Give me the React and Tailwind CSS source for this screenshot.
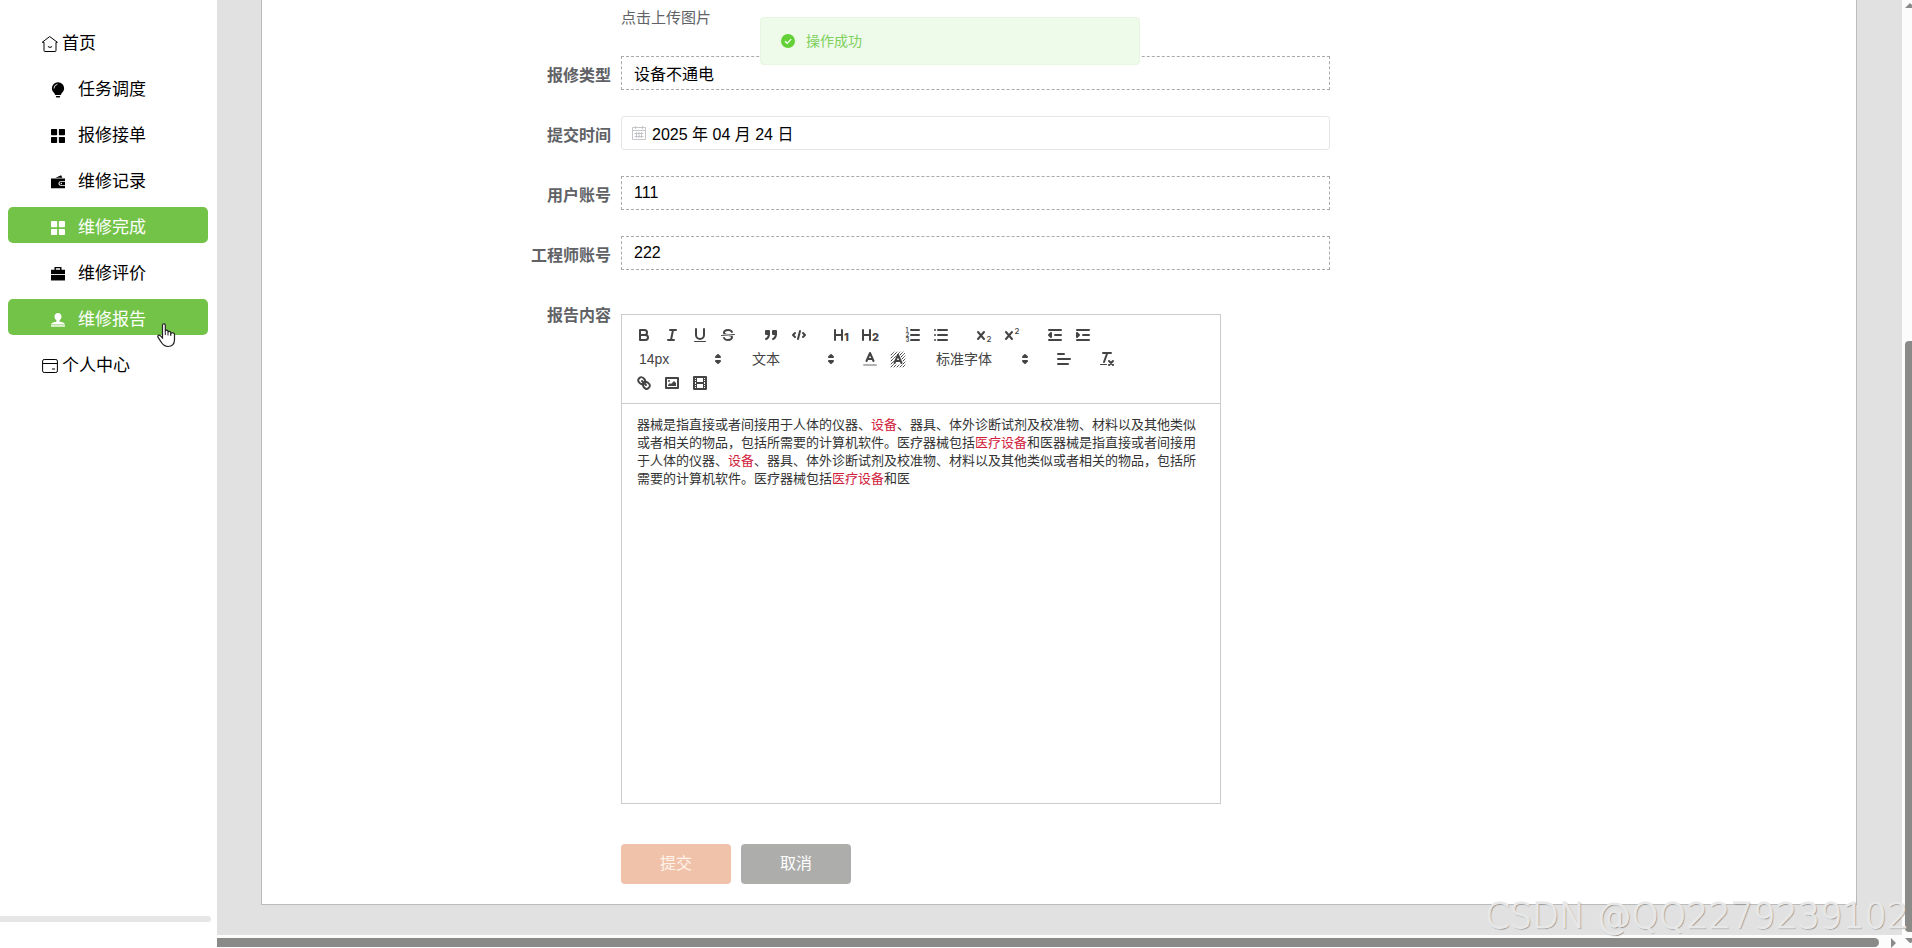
import React from "react";

const menu = [
  { label: "首页", icon: "home", top: true },
  { label: "任务调度", icon: "bulb" },
  { label: "报修接单", icon: "grid" },
  { label: "维修记录", icon: "wallet" },
  { label: "维修完成", icon: "grid", active: true },
  { label: "维修评价", icon: "case" },
  { label: "维修报告", icon: "user", active: true },
  { label: "个人中心", icon: "card", top: true },
];

const menuShapes = {
  home: (
    <g fill="none" stroke="currentColor" strokeWidth="1" strokeLinejoin="round" strokeLinecap="round">
      <path d="M8 .8 15.4 6.3H14v8.2q0 1-1 1H3q-1 0-1-1V6.3H.6Z" />
      <path d="M6.2 10.8q1.8 1.5 3.6 0" />
    </g>
  ),
  bulb: (
    <g fill="currentColor">
      <path d="M8-1A7 7 0 0 0 1 6c0 2.800 1.700 4.200 2.800 5.600l1 2h6.400l1-2C13.300 10.200 15 8.800 15 6A7 7 0 0 0 8-1Z" />
      <path d="M5.400 14.800h5.200l-.8 1.700H6.200Z" />
      <path d="M3.400 5.800A4.600 4.600 0 0 1 7 1.500" fill="none" stroke="#fff" strokeWidth="1" strokeLinecap="round" />
    </g>
  ),
  grid: (
    <g fill="currentColor">
      <rect x="0" y="0" width="7" height="7" rx=".8" />
      <rect x="9" y="0" width="7" height="7" rx=".8" />
      <rect x="0" y="9" width="7" height="7" rx=".8" />
      <rect x="9" y="9" width="7" height="7" rx=".8" />
    </g>
  ),
  wallet: (
    <g fill="currentColor">
      <path d="M5 3.2 11.6.4 13 3.2Z" />
      <path d="M0 4h16v3h-4.8a2.6 2.6 0 0 0 0 5.4H16V15H0Z" />
      <path d="M11.4 8H16v3.4h-4.6a1.7 1.7 0 0 1 0-3.4Z" />
      <circle cx="11.8" cy="9.7" r=".8" fill="#fff" />
    </g>
  ),
  case: (
    <g fill="currentColor">
      <path d="M4 0h8v3h4v5H0V3h4Zm1.600 1.500V3h4.800V1.500Z" fillRule="evenodd" />
      <path d="M0 9h16v6.4H0Z" />
    </g>
  ),
  user: (
    <g fill="currentColor">
      <path d="M8 0C5.600 0 4 1.700 4 4c0 1.900 1 3.300 2.200 4.200V10C3.500 10.500.600 11 0 13.200h16C15.400 11 12.500 10.500 9.800 10V8.200C11 7.300 12 5.900 12 4c0-2.300-1.600-4-4-4Z" />
      <rect x="0" y="14" width="16" height="1.600" />
    </g>
  ),
  card: (
    <g fill="none" stroke="currentColor" strokeWidth="1">
      <rect x=".6" y="1.500" width="14.800" height="13" rx="1.600" />
      <path d="M.6 5.500h14.800M10 11h3" />
    </g>
  ),
};

function MenuIcon({ name, className }) {
  return (
    <svg viewBox="0 0 16 16" className={"overflow-visible " + className} aria-hidden="true">
      {menuShapes[name]}
    </svg>
  );
}

function Sidebar() {
  return (
    <aside className="flex w-[217px] shrink-0 flex-col justify-between bg-white">
      <nav>
        <ul className="pt-5">
          {menu.map((m) => (
            <li key={m.label} className="h-[46px] px-2 pt-[3px]">
              <a
                href="#"
                className={
                  "mr-[1px] flex h-9 items-center rounded-[5px] pt-[6px] text-[17px] " +
                  (m.top ? "gap-1 pl-[34px] " : "gap-[13px] pl-[43px] ") +
                  (m.active ? "bg-[#73c348] text-white" : "text-black")
                }
              >
                <MenuIcon name={m.icon} className={m.top ? "size-4" : "size-[14px]"} />
                <span>{m.label}</span>
              </a>
            </li>
          ))}
        </ul>
      </nav>
      <div className="mr-[6px] mb-[26px] h-[6px] rounded-r-full bg-[#e6e6e6]" />
    </aside>
  );
}

const X_MARK = <path d="M3 6l6 7M9 6l-6 7" />;

const tools = {
  bold: (
    <>
      <path d="M5,4H9.500A2.500,2.500,0,0,1,9.500,9H5Z" />
      <path d="M5,9h5.500A2.500,2.500,0,0,1,10.500,14H5Z" />
    </>
  ),
  italic: <path d="M7 4h6M5 14h6M8 14l2-10" />,
  underline: (
    <>
      <path d="M5,3V9a4,4,0,0,0,8,0V3" />
      <rect x="3" y="15" width="12" height="1" rx=".5" fill="currentColor" stroke="none" />
    </>
  ),
  strike: (
    <>
      <path d="M15.500 8.500 2.500 9.500" strokeWidth="1" />
      <g fill="currentColor" stroke="none">
        <path d="M9.007,8C6.542,7.791,6,7.519,6,6.500,6,5.792,7.283,5,9,5c1.571,0,2.765.679,2.969,1.309a1,1,0,0,0,1.900-.617C13.356,4.106,11.354,3,9,3,6.200,3,4,4.538,4,6.500a3.200,3.200,0,0,0,.5,1.843Z" />
        <path d="M8.984,10C11.457,10.208,12,10.479,12,11.500c0,.708-1.283,1.500-3,1.500-1.571,0-2.765-.679-2.969-1.309a1,1,0,1,0-1.900.617C4.644,13.894,6.646,15,9,15c2.800,0,5-1.538,5-3.500a3.200,3.200,0,0,0-.5-1.843Z" />
      </g>
    </>
  ),
  quote: (
    <g fill="currentColor">
      <rect x="4" y="5" width="3" height="3" />
      <rect x="11" y="5" width="3" height="3" />
      <path d="M7,8c0,4.031-3,5-3,5" fillRule="evenodd" />
      <path d="M14,8c0,4.031-3,5-3,5" fillRule="evenodd" />
    </g>
  ),
  code: <path d="M5 7 3 9l2 2M13 7l2 2-2 2M10 5 8 13" />,
  h1: (
    <>
      <path d="M2 4v10M9 4v10M2 9h7" />
      <text x="11" y="15" fontSize="11" fontWeight="800" fill="currentColor" stroke="none">1</text>
    </>
  ),
  h2: (
    <>
      <path d="M2 4v10M9 4v10M2 9h7" />
      <text x="11" y="15" fontSize="11" fontWeight="800" fill="currentColor" stroke="none">2</text>
    </>
  ),
  ordered: (
    <>
      <path d="M7 4h8M7 9h8M7 14h8" />
      <g fontSize="6" fontWeight="600" fill="currentColor" stroke="none">
        <text x="1.500" y="6">1</text>
        <text x="1.500" y="11">2</text>
        <text x="1.500" y="16">3</text>
      </g>
    </>
  ),
  bullet: <path d="M6 4h9M6 9h9M6 14h9M3 4h0M3 9h0M3 14h0" />,
  sub: (
    <>
      {X_MARK}
      <text x="11.500" y="16" fontSize="8" fontWeight="500" fill="currentColor" stroke="none">2</text>
    </>
  ),
  sup: (
    <>
      {X_MARK}
      <text x="11.500" y="8" fontSize="8" fontWeight="500" fill="currentColor" stroke="none">2</text>
    </>
  ),
  outdent: (
    <>
      <path d="M3 14h12M3 4h12M9 9h6" />
      <path d="M5 7v4L3 9Z" fill="currentColor" />
    </>
  ),
  indent: (
    <>
      <path d="M3 14h12M3 4h12M9 9h6" />
      <path d="M3 7v4l2-2Z" fill="currentColor" />
    </>
  ),
  color: (
    <>
      <path d="M3 15h12" opacity=".4" />
      <path d="M5.500 11 9 3l3.500 8M11.600 9H6.400" />
    </>
  ),
  background: (
    <>
      <path
        d="M2 5l3-3M2 8l6-6M2 11l4.500-4.500M2 14l3-3M2 17l3-3M8 5l3-3M11 5l3-3M12 7l4-4M13 9l3-3M14 11l2-2M14 14l2-2M14 17l2-2M5 17l2-2M8 17l2-2M11 17l2-2"
        strokeWidth="1"
        strokeDasharray="1 1"
      />
      <path d="M5.500 13 9 5l3.500 8M11.600 11H6.400" />
    </>
  ),
  align: <path d="M3 9h12M3 14h10M3 4h6" />,
  clean: (
    <>
      <path d="M5 3h8M6 12l3.300-9M11 11l4 4M15 11l-4 4" />
      <rect x="2" y="14" width="7" height="1" rx=".5" fill="currentColor" stroke="none" />
    </>
  ),
  link: (
    <>
      <path d="M7 7l4 4" />
      <path d="M8.900,4.577a3.476,3.476,0,0,1,.36,4.679A3.476,3.476,0,0,1,4.577,8.900C3.185,7.500,2.035,6.400,4.217,4.217S7.500,3.185,8.900,4.577Z" />
      <path d="M13.423,9.100a3.476,3.476,0,0,0-4.679-.36,3.476,3.476,0,0,0,.36,4.679c1.392,1.392,2.500,2.542,4.679.36S14.815,10.500,13.423,9.100Z" />
    </>
  ),
  image: (
    <>
      <rect x="3" y="4" width="12" height="10" />
      <g fill="currentColor" stroke="none">
        <circle cx="6" cy="7" r="1" />
        <path d="M5 12v-1l2-2 1 1 3-3 2 2v3Z" />
      </g>
    </>
  ),
  video: (
    <>
      <rect x="3" y="3" width="12" height="12" />
      <g fill="currentColor" stroke="none">
        <path d="M5 3h1v12H5ZM12 3h1v12h-1ZM5 8h8v2H5ZM3 5h3v1H3ZM3 7h3v1H3ZM3 10h3v1H3ZM3 12h3v1H3ZM12 5h3v1h-3ZM12 7h3v1h-3ZM12 10h3v1h-3ZM12 12h3v1h-3Z" />
      </g>
    </>
  ),
};

function ToolGroup({ items }) {
  return (
    <span className="mr-[15px] flex">
      {items.map((name) => (
        <button key={name} type="button" aria-label={name} className="h-6 w-7 px-[5px] py-[3px]">
          <svg
            viewBox="0 0 18 18"
            className="size-[18px] font-['Inter',sans-serif]"
            fill="none"
            stroke="currentColor"
            strokeWidth="2"
            strokeLinecap="round"
            strokeLinejoin="round"
          >
            {tools[name]}
          </svg>
        </button>
      ))}
    </span>
  );
}

function Picker({ value, label, className }) {
  return (
    <span className={"relative mr-[15px] h-6 " + className}>
      <select
        aria-label={label}
        defaultValue={value}
        className="h-6 w-full appearance-none bg-transparent pl-[9px] text-sm outline-none"
      >
        <option>{value}</option>
      </select>
      <svg
        viewBox="0 0 18 18"
        className="pointer-events-none absolute top-[3px] right-[1px] size-[18px]"
        fill="currentColor"
        stroke="currentColor"
        strokeWidth="2"
        strokeLinejoin="round"
      >
        <path d="M7 11h4l-2 2ZM7 7h4L9 5Z" />
      </svg>
    </span>
  );
}

function Red({ children }) {
  return <span className="text-[#d0213c]">{children}</span>;
}

function Editor() {
  return (
    <div className="mt-[18px] w-[600px] border border-[#ccc]">
      <div className="flex flex-wrap border-b border-[#ccc] p-2 text-[#444]">
        <ToolGroup items={["bold", "italic", "underline", "strike"]} />
        <ToolGroup items={["quote", "code"]} />
        <ToolGroup items={["h1", "h2"]} />
        <ToolGroup items={["ordered", "bullet"]} />
        <ToolGroup items={["sub", "sup"]} />
        <ToolGroup items={["outdent", "indent"]} />
        <Picker label="字号" value="14px" className="w-[98px]" />
        <Picker label="标题" value="文本" className="w-[98px]" />
        <ToolGroup items={["color", "background"]} />
        <Picker label="字体" value="标准字体" className="w-[108px]" />
        <ToolGroup items={["align"]} />
        <ToolGroup items={["clean"]} />
        <ToolGroup items={["link", "image", "video"]} />
      </div>
      <div
        role="textbox"
        aria-label="报告内容"
        contentEditable
        suppressContentEditableWarning
        className="min-h-[399px] px-[15px] py-3 text-[13px] leading-[18px] text-[#333] outline-none"
      >
        器械是指直接或者间接用于人体的仪器、<Red>设备</Red>、器具、体外诊断试剂及校准物、材料以及其他类似或者相关的物品，包括所需要的计算机软件。医疗器械包括<Red>医疗设备</Red>和医器械是指直接或者间接用于人体的仪器、<Red>设备</Red>、器具、体外诊断试剂及校准物、材料以及其他类似或者相关的物品，包括所需要的计算机软件。医疗器械包括<Red>医疗设备</Red>和医
      </div>
    </div>
  );
}

const labelClass = "w-[359px] shrink-0 pr-[10px] text-right text-base leading-[40px] font-bold text-[#606266]";

function Field({ id, label, value, date }) {
  return (
    <div className="mb-[26px] flex h-[34px] items-start">
      <label htmlFor={id} className={labelClass}>
        {label}
      </label>
      <div className="relative w-full max-w-[709px]">
        <input
          id={id}
          defaultValue={value}
          className={
            "h-[34px] w-full border bg-white pr-3 pb-[1px] text-base text-black outline-none " +
            (date ? "rounded-[3px] border-[#e6e6e6] pl-[30px]" : "border-dashed border-[#aaa] pl-3")
          }
        />
        {date && (
          <svg
            viewBox="0 0 14 14"
            className="pointer-events-none absolute top-[10px] left-[11px] size-[14px]"
            fill="none"
            stroke="#c4c6ca"
            strokeWidth="1"
          >
            <path d="M.5 1.500h13v12H.5ZM.5 4.500h13M3.500 0v3M10.500 0v3M2.500 7.500h9M2.500 10.500h9M4.500 6v6M7 6v6M9.500 6v6" />
          </svg>
        )}
      </div>
    </div>
  );
}

function Cursor() {
  return (
    <svg viewBox="0 0 19 25" className="pointer-events-none absolute top-[323px] left-[157px] h-[25px] w-[19px]">
      <path
        d="M5.500 2.300C5.500.3 8.300.3 8.300 2.300V8.200C8.500 6.700 11 6.900 11 8.500V9.300C11.500 7.900 13.800 8.200 13.800 9.800V10.400C14.500 9.300 17.500 9.600 17.500 11.400V16.500C17.500 21 15 23.500 11 23.500 7.500 23.500 5.500 21.500 4 18.800L1 14.200C.1 12.500 2.200 11.500 3.500 12.800L5.500 15Z"
        fill="#fff"
        stroke="#222"
        strokeWidth="1.200"
      />
      <path d="M8.300 8v4M11 9v3.500M13.800 10v3" stroke="#222" strokeWidth="1" />
    </svg>
  );
}

export default function App() {
  return (
    <div className="relative flex min-h-screen overflow-hidden bg-white font-['Liberation_Sans','Noto_Sans_CJK_SC',sans-serif]">
      <Sidebar />
      <div className="flex min-w-0 flex-1 flex-col">
        <div className="flex flex-1">
          <main className="min-w-0 flex-1 bg-[#e1e1e1] pr-[45px] pb-[30px] pl-11">
            <form className="border-x border-b border-[#bbb] bg-white pb-5" onSubmit={(e) => e.preventDefault()}>
              <p className="mb-5 pl-[359px] text-[15px] leading-[36px] text-[#606266]">点击上传图片</p>
              <Field id="type" label="报修类型" value="设备不通电" />
              <Field id="date" label="提交时间" value="2025 年 04 月 24 日" date />
              <Field id="user" label="用户账号" value="111" />
              <Field id="engineer" label="工程师账号" value="222" />
              <div className="flex items-start">
                <span className={labelClass}>报告内容</span>
                <Editor />
              </div>
              <div className="mt-10 flex gap-[10px] pl-[359px]">
                <button type="submit" className="h-10 w-[110px] rounded bg-[#efc2a9] text-base text-[#fff4ec]">
                  提交
                </button>
                <button type="button" className="h-10 w-[110px] rounded bg-[#adadab] text-base text-white">
                  取消
                </button>
              </div>
            </form>
          </main>
          <div className="flex w-[10px] flex-col items-end bg-[#fcfcfc]">
            <svg viewBox="0 0 7 8" className="mb-[333px] h-2 w-[7px]">
              <path d="M0 8 5 3l2 2v3Z" fill="#8a8a88" />
            </svg>
            <div className="mb-[3px] w-[7px] flex-1 rounded-l bg-[#8a8a88]" />
          </div>
        </div>
        <div className="flex h-[13px] items-start bg-[#fcfcfc] pt-[3px]">
          <div className="h-[9px] flex-1 rounded-r-full bg-[#8a8a88]" />
          <svg viewBox="0 0 33 10" className="h-[10px] w-[33px]">
            <path d="M12 0l5 5-5 5ZM26 0h7v4l-1 1h-1Z" fill="#8a8a88" />
          </svg>
        </div>
      </div>

      <div
        role="alert"
        className="absolute top-[17px] left-[760px] flex h-12 w-[380px] items-center gap-[11px] rounded border border-[#e8f5e0] bg-[#eefaea] pl-5 text-sm text-[#7ed15c]"
      >
        <svg viewBox="0 0 14 14" className="size-[14px]">
          <circle cx="7" cy="7" r="7" fill="#62d036" />
          <path d="M4 7.200 6.200 9.300 10.200 5.200" fill="none" stroke="#fff" strokeWidth="1.200" />
        </svg>
        操作成功
      </div>
      <Cursor />
      <div className="pointer-events-none absolute right-[3px] bottom-[10px] font-['DejaVu_Sans',sans-serif] text-[35px] leading-[44px] font-extralight whitespace-nowrap text-[#e8e8e8] [-webkit-text-stroke:1px_#e8e8e8] [text-shadow:1px_1px_1px_#888]">
        CSDN @QQ2279239102
      </div>
    </div>
  );
}
